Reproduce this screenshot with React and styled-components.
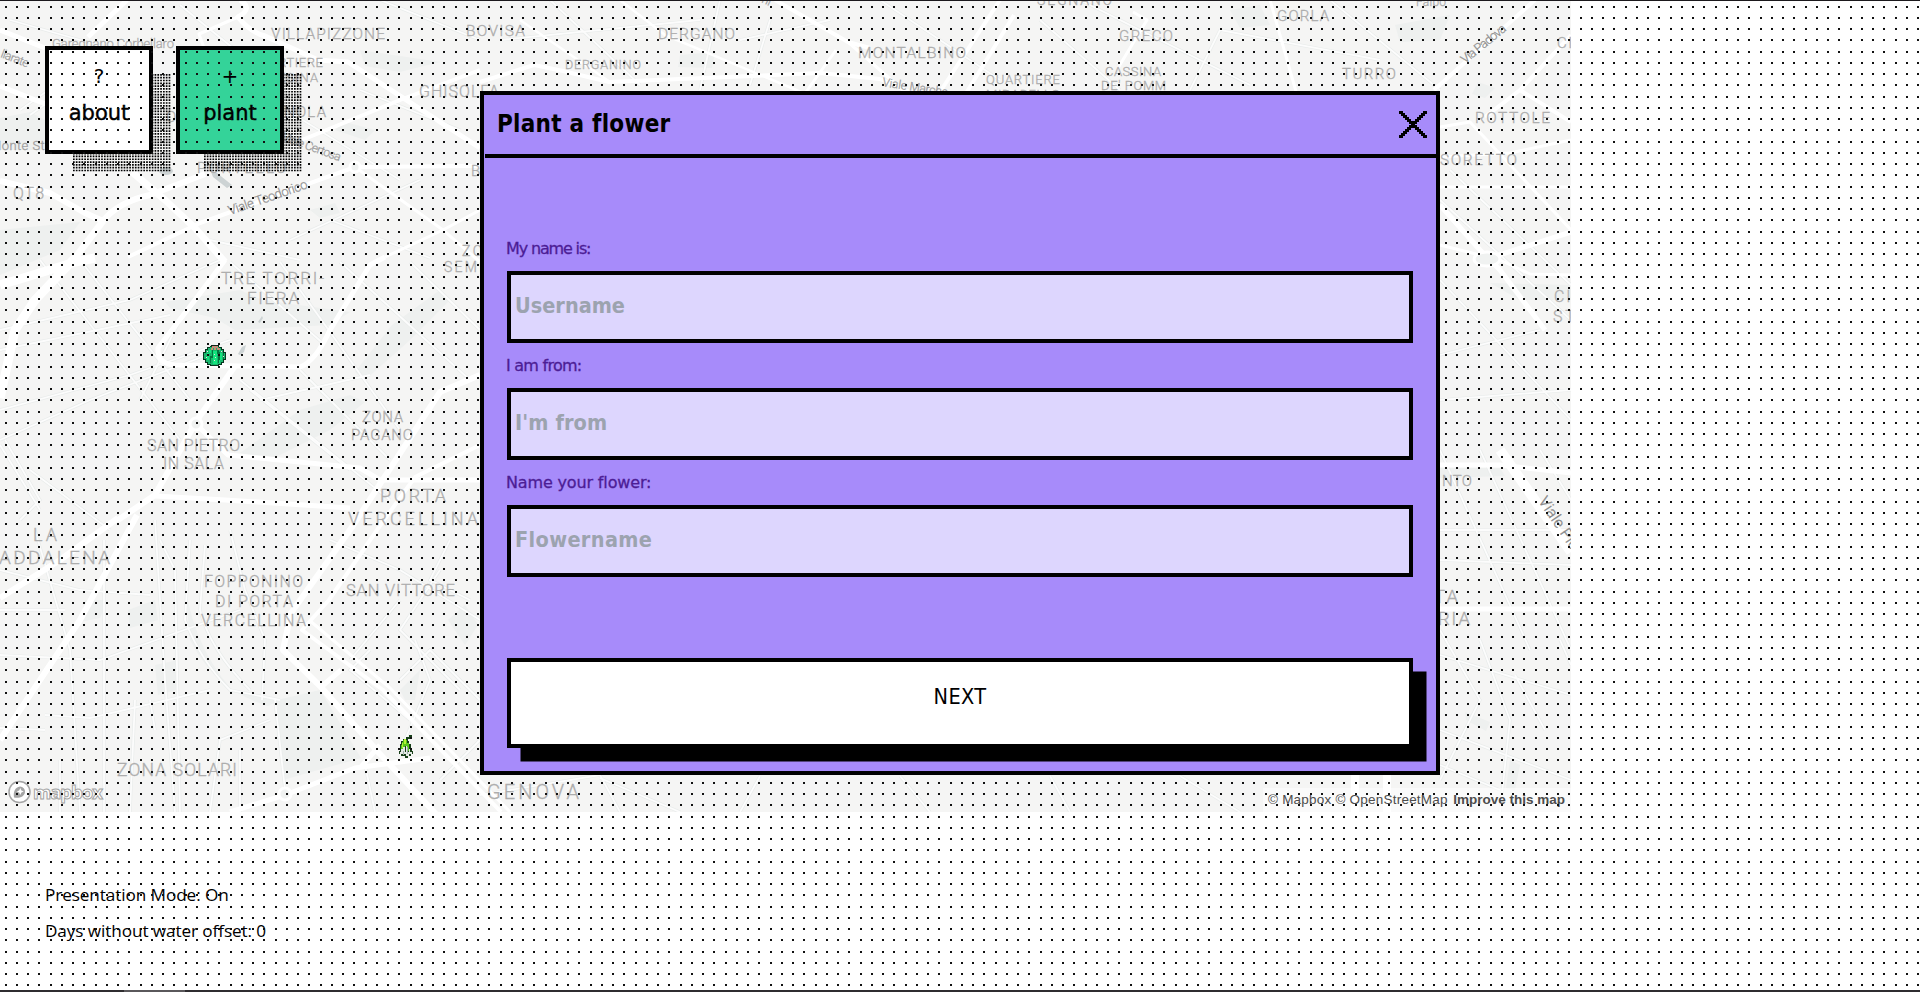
import React from 'react';
import styled, { createGlobalStyle } from 'styled-components';

const GlobalStyle = createGlobalStyle`
  *, *::before, *::after { box-sizing: border-box; }
  html, body { margin: 0; padding: 0; background: #fff; overflow: hidden; }
  body { font-family: "Open Sans", "Noto Sans", sans-serif; color: #000; }
`;

const pixelFont = '"DejaVu Sans", sans-serif';
const condensedFont = '"DejaVu Sans Condensed", "DejaVu Sans", sans-serif';

const Page = styled.main`
  position: relative;
  width: 1920px;
  height: 992px;
  overflow: hidden;
  background: #fff;
  display: flex;
  flex-direction: column;
  border-top: 1px solid #1b181c;
`;

const MapPane = styled.section`
  position: relative;
  flex: none;
  width: 1571px;
  height: 811px;
  overflow: hidden;
  background: #f5f5f4;
`;

const MapDrawing = styled.svg`
  display: block;
  margin-top: -1px;
`;

const Place = styled.text`
  font-family: Roboto, sans-serif;
  font-weight: 300;
  font-size: ${(p) => p.$size}px;
  fill: ${(p) => p.$tone};
  stroke: ${(p) => p.$tone};
  stroke-width: 0.3px;
`;

const MapLogo = styled.div`
  position: absolute;
  left: 8px;
  bottom: 8px;
  display: flex;
  align-items: center;
  gap: 2px;
`;

const Wordmark = styled.span`
  font: 700 18.5px/24px "Open Sans", sans-serif;
  letter-spacing: -1px;
  color: #fff;
  -webkit-text-stroke: 1px #a3a3a3;
`;

const Attribution = styled.div`
  position: absolute;
  right: 0;
  bottom: 0;
  width: 308px;
  height: 24px;
  padding: 0 6px 0 5px;
  display: flex;
  align-items: center;
  justify-content: space-between;
  background: rgba(255, 255, 255, 0.5);
  font: 13.5px/22px "Liberation Sans", sans-serif;
  color: #4c4c4c;
  white-space: nowrap;
`;

const Credits = styled.span`
  letter-spacing: 0.22px;
`;

const Hud = styled.nav`
  position: absolute;
  top: 45px;
  left: 45px;
  display: flex;
  gap: 23px;
`;

const TileSlot = styled.div`
  position: relative;
  z-index: 0;
`;

const TileShadow = styled.svg`
  position: absolute;
  z-index: -1;
  left: 28px;
  top: 28px;
`;

const Tile = styled.button`
  width: 108px;
  height: 108px;
  padding: 0;
  display: flex;
  flex-direction: column;
  align-items: center;
  justify-content: flex-start;
  border: 4px solid #000;
  background: ${(p) => p.$fill};
  color: #000;
  font-family: ${pixelFont};
`;

const TileIcon = styled.span`
  height: 43px;
  padding-top: 14px;
  font-size: 20px;
  line-height: 24px;
`;

const TileLabel = styled.span`
  padding-top: 6px;
  font-size: 21px;
  line-height: 28px;
  -webkit-text-stroke: 0.4px #000;
`;

const StatusList = styled.div`
  padding: 65px 0 0 45px;
  display: flex;
  flex-direction: column;
  font-size: 17.2px;
  line-height: 36px;
  letter-spacing: -0.1px;
  white-space: nowrap;
`;

const StatusLine = styled.div`
  height: 36px;
`;

const DotVeil = styled.svg`
  position: absolute;
  inset: 0;
  pointer-events: none;
`;

const BottomBar = styled.div`
  position: absolute;
  left: 0;
  right: 0;
  bottom: 0;
  height: 2px;
  padding-left: 124px;
  background: #2f2d30;
`;

const BottomThumb = styled.div`
  width: 61px;
  height: 2px;
  background: #5a585b;
`;

const Overlay = styled.div`
  position: absolute;
  inset: 0;
  padding-top: 90px;
  display: flex;
  justify-content: center;
  align-items: flex-start;
`;

const Dialog = styled.section`
  width: 960px;
  height: 684px;
  border: 4px solid #000;
  background: #a78bfa;
  display: flex;
  flex-direction: column;
`;

const DialogHeader = styled.header`
  height: 63px;
  margin-left: 1px;
  padding: 0 9px 0 12px;
  display: flex;
  align-items: center;
  justify-content: space-between;
  border-bottom: 4px solid #000;
`;

const Title = styled.h1`
  margin: -2px 0 0;
  font: 700 24px/30px ${condensedFont};
  letter-spacing: 0.25px;
`;

const CloseButton = styled.button`
  width: 28px;
  height: 28px;
  margin-top: 1px;
  padding: 0;
  border: 0;
  background: none;
`;

const Form = styled.form`
  flex: 1;
  padding: 0 23px;
  display: flex;
  flex-direction: column;
`;

const Fields = styled.div`
  padding-top: 68px;
  display: flex;
  flex-direction: column;
`;

const Field = styled.label`
  height: 117px;
  display: flex;
  flex-direction: column;
`;

const Caption = styled.span`
  height: 45px;
  padding-top: 12px;
  margin-left: -1px;
  font: 16px/22px ${pixelFont};
  letter-spacing: ${(p) => p.$track}px;
  color: #4c1d95;
  -webkit-text-stroke: 0.3px #4c1d95;
`;

const Input = styled.input`
  width: 100%;
  height: 72px;
  padding: 0 4px 4px;
  border: 4px solid #000;
  border-radius: 0;
  outline: 0;
  background: #ddd6fe;
  font: 700 21.5px/28px ${condensedFont};
  letter-spacing: ${(p) => p.$track}px;

  &::placeholder { color: #9ca3af; opacity: 1; }
`;

const NextButton = styled.button`
  width: 906px;
  height: 90px;
  margin-top: 81px;
  padding: 0 0 12px;
  border: 4px solid #000;
  background: #fff;
  box-shadow: 13.5px 13.5px 0 #000;
  color: #000;
  font: 21.5px/28px ${condensedFont};
  letter-spacing: 0.4px;
`;

const roads = [
  [5, 'M127 0L88 37'],
  [5, 'M240 0Q254 8 238 17Q250 32 265 36L318 60L348 62L480 148'],
  [3, 'M238 17L199 34L204 48'],
  [6, 'M0 181L50 193L85 213L103 221Q118 202 150 195L205 174'],
  [7, 'M103 221L75 258'],
  [7, 'M132 172L165 200L195 228L225 262'],
  [4, 'M128 257L200 223L355 167L480 166'],
  [3, 'M355 167L443 230L480 262M443 230L480 210M443 230L385 257'],
  [4, 'M302 140L400 100L480 70'],
  [5, 'M0 86L48 105M0 30L45 48'],
  [9, 'M75 258L35 300L15 330L0 398M0 285Q50 270 75 262L95 258'],
  [5, 'M225 260L195 300L158 348Q157 364 175 365L300 367Q315 362 330 330L370 265L385 257'],
  [6, 'M235 366L197 420L155 495L118 520'],
  [5, 'M200 428L228 455L360 468L380 480L480 480M155 496L225 500L350 508'],
  [6, 'M480 375L440 392L352 527L291 613L283 650L321 687L379 753L436 814'],
  [4, 'M480 445L415 477L377 530L329 600L302 630L383 690L501 812'],
  [3, 'M309 620L390 688L510 812'],
  [6, 'M118 518L60 560L0 598M137 515L80 620L0 740'],
  [5, 'M230 812L285 795L355 768L430 758M321 687L341 670M360 768L380 745'],
  [4, 'M480 82L534 65L563 71L609 82L820 73L880 79L910 92'],
  [2.5, 'M520 20L610 82M620 0L665 35L820 100'],
  [4, 'M775 0L848 42L870 48M1000 0L938 95M1014 15L965 95'],
  [3, 'M848 42L905 92M836 50L806 92M1270 0L1297 95M1133 12L1147 20L1118 68'],
  [4, 'M1535 0L1434 90M1571 35L1520 90L1485 117M1520 90L1571 122'],
  [3, 'M1440 127L1470 122L1571 230M1571 140L1510 153L1440 157M1440 187H1571'],
  [5, 'M1571 232L1490 258M1440 205L1480 250L1500 270L1545 330'],
  [3, 'M1440 245L1500 260L1530 274L1571 275'],
  [10, 'M1500 450L1571 552'],
  [5, 'M1440 465H1500L1571 473M1440 609H1571'],
  [8, 'M1355 775V812M1387 775V812'],
];

const lanes = [
  'M0 330L130 300L220 260M0 350L170 315M0 410L130 375L230 340M0 440L90 400L220 350',
  'M40 260L180 440M80 260L190 400M0 445L40 510M5 440L40 500L20 520M30 470L110 530',
  'M230 262L325 345M280 262L400 430M340 262L470 380M250 390L350 470M410 262L480 330',
  'M140 400L180 320M240 380L390 500M300 370L390 460M260 400L370 375',
  'M35 530L70 650L80 812M104 540V812M155 520L165 680L175 812M160 540L175 570L180 812',
  'M0 570L80 590L150 595M0 610H65M0 655L100 660L240 610M0 728L45 730M45 715L90 718L210 690',
  'M190 540L185 620Q200 660 230 690L280 700M205 545L200 610Q210 650 250 690',
  'M230 530L245 590L265 640L262 700M275 700L285 790M135 700L130 812M150 700L155 730',
  'M330 540L400 570L480 620M400 600L350 660M440 570L400 630L460 690M400 680L430 650L480 700',
  'M370 650L350 670L410 720M415 640L430 680L405 740M450 540L430 580L470 600M440 780L480 740',
  'M60 812V760M210 812L220 740L270 720M240 750V812M365 765L375 812',
  'M10 20L150 60M180 5L260 70M380 0L480 40M360 90L460 130M270 100L400 180M290 240L420 180',
  'M210 240L300 260M330 220L430 258M20 110L70 75M30 115L80 80',
  'M500 40L700 20M550 0L640 85M720 0L700 90M740 40L830 20M750 85L770 20M880 0L1000 80',
  'M1040 20L1120 90M1080 0L1250 85M1190 90L1220 30M1220 30L1380 60M1330 0L1440 90',
  'M1440 200L1571 320M1450 170L1571 285M1440 280L1571 420M1440 355L1540 330M1440 400L1571 390',
  'M1440 450L1530 650M1480 450L1571 650M1540 450L1571 500M1440 530H1571M1440 560L1571 565',
  'M1440 630L1480 700L1440 780M1480 640L1510 720L1500 812M1440 655L1571 695M1440 730L1571 780M1515 675L1545 730M1440 765L1500 790M1560 640L1571 665',
  'M480 795L600 775L620 812M600 778L680 812M760 776L740 812M900 776L930 812M1050 776L1070 812M1180 776L1240 812',
];

const parks = [
  'M165 302L240 290L262 300L350 312L330 325L235 330L215 318L170 308Z',
  'M240 453L300 410L350 395L365 402L330 430L270 460Z',
  'M392 325L440 290L450 300L410 340L365 380L355 372Z',
  'M277 700L320 690L361 758L283 780Z',
  'M183 565Q188 640 232 690L280 700L268 706Q215 690 190 640Z',
  'M0 118L30 112L45 120V150H0Z',
  'M0 230L80 222L60 250L0 275Z',
  'M360 50L440 62L400 72L365 66Z',
  'M345 122L375 130L365 140L335 130Z',
  'M310 210L335 203L340 213L320 218Z',
  'M85 600H108L100 618L80 622Z',
  'M128 610L155 600L158 620L130 628Z',
  'M155 665L178 660L176 690L158 695Z',
  'M400 690L420 670L415 700L405 700Z',
  'M448 620L465 605L478 625L465 645Z',
  'M680 55L715 52L712 68L678 67Z',
  'M1230 10L1260 5L1270 25L1240 28Z',
  'M1395 25L1450 15L1440 40L1400 42Z',
  'M1490 283L1571 285V300H1520Z',
  'M1465 712L1490 722L1486 731L1466 720Z',
  'M1510 760L1520 765L1515 790L1506 788Z',
  'M1440 467L1500 468L1505 476L1440 478Z',
  'M1478 82L1495 88L1485 98L1472 94Z',
];

const A = '#adadad';
const B = '#9e9e9e';
// text, x, baseline, width, size, tone, angle
const places = [
  ['VILLAPIZZONE', 271, 38.5, 114, 15.5, A],
  ['Garegnano Corbellaro', 52, 48, 122, 13, A],
  ['QUARTIERE', 251, 67, 72, 13, A],
  ['VARESINA', 251, 82, 67, 13, A],
  ['CAGNOLA', 251, 117, 75, 15, A],
  ['O', 166, 122, 10, 15, A],
  ['Monte Stella', -10, 149.5, 76, 13, B],
  ['llarate', 0, 57, 29, 12, B, 21],
  ['QT8', 13, 199, 31, 16, A],
  ['PORTELLO', 197, 173, 89, 15, A],
  ['Viale Certosa', 281, 140, 62, 12, B, 20],
  ['Viale Teodorico', 230, 215, 83, 13, '#929292', -19],
  ['BOVISA', 466, 36, 59, 15.5, A],
  ['GHISOLFA', 419, 97, 80, 16, A],
  ['BULLONA', 471, 176, 80, 15, A],
  ['ZONA', 462, 256, 44, 14, A],
  ['SEMPIONE', 444, 272, 84, 14, A],
  ['TRE TORRI-', 221, 284, 103, 17, A],
  ['FIERA', 247, 304, 52, 17, A],
  ['ZONA', 362, 422, 41, 15, A],
  ['PAGANO', 351, 440, 62, 15, A],
  ['SAN PIETRO', 147, 451, 93, 16, A],
  ['IN SALA', 163, 469, 61, 16, A],
  ['PORTA', 380, 502, 66, 18, A],
  ['VERCELLINA', 348, 525, 130, 18, A],
  ['LA', 33, 541, 24, 18, A],
  ['ADDALENA', -1, 564, 111, 19, A],
  ['FOPPONINO', 204, 587, 99, 16, A],
  ['DI PORTA', 215, 607, 78, 16, A],
  ['VERCELLINA', 201, 626, 105, 16, A],
  ['SAN VITTORE', 346, 596, 109, 16.5, A],
  ['ZONA SOLARI', 117, 776, 120, 17.5, A],
  ['GENOVA', 487, 799, 92, 20, A],
  ['DERGANO', 658, 38.5, 77, 15.5, A],
  ['DERGANINO', 565, 68.5, 76, 12.5, A],
  ['MONTALBINO', 858, 58, 108, 15.5, A],
  ['Viale Marche', 882, 86, 66, 12, B, 9],
  ['QUARTIERE', 986, 84, 74, 13, A],
  ['MIRABELLO', 986, 99, 74, 13, A],
  ['CASSINA', 1105, 76, 56, 13, A],
  ["DE' POMM", 1101, 90, 65, 13, A],
  ['GRECO', 1119, 41, 54, 15, A],
  ['GORLA', 1277, 21, 52, 15, A],
  ['SEGNANO', 1037, 5, 75, 14, A],
  ['TURRO', 1342, 78.5, 54, 15, A],
  ['Falpo', 1416, 6, 30, 12, A],
  ['ni', 761, 2, 9, 12, B, 25],
  ['Via Padova', 1465, 64, 54, 12.5, '#929292', -39],
  ['CIMIANO', 1557, 48, 70, 15, A],
  ['ROTTOLE', 1475, 122.5, 75, 15.5, A],
  ['CASORETTO', 1417, 165, 100, 15.5, A],
  ['CITTÀ', 1554, 302, 50, 16, A],
  ['STUDI', 1553, 322, 55, 16, A],
  ['NTO', 1442, 486, 30, 15, A],
  ['PORTA', 1393, 603, 65, 19, A],
  ['VITTORIA', 1378, 625, 92, 19, A],
  ['Viale Piceno', 1538, 501, 86, 15.5, '#868686', 56],
];

function CityMap() {
  return (
    <MapDrawing width="1571" height="812" viewBox="0 0 1571 812">
      <g fill="#eef0ef">{parks.map((d) => <path key={d} d={d} />)}</g>
      <g fill="#cdd3d4">
        <path d="M238 354l4-7 4-2-2 7-4 3zM258 322l4-6 1 2-3 5zM211 172l6 1 15 12-5 3-14-11z" />
        <ellipse cx="166" cy="171" rx="7" ry="4" />
      </g>
      <g fill="none" stroke="#e9eceb" strokeWidth="3.2">{lanes.map((d) => <path key={d} d={d} />)}</g>
      <g fill="none" stroke="#fcfcfc" strokeWidth="1.8">{lanes.map((d) => <path key={d} d={d} />)}</g>
      <g fill="none" stroke="#fff" strokeLinejoin="round">
        {roads.map(([w, d]) => <path key={d} d={d} strokeWidth={w} />)}
      </g>
      <g fill="#f0f2f1" stroke="#fff" strokeWidth="3">
        <circle cx="196" cy="424" r="6" />
        <circle cx="285" cy="794" r="6" />
        <circle cx="355" cy="167" r="5" />
        <ellipse cx="1487" cy="259" rx="13" ry="7" />
      </g>
      {places.map(([t, x, y, w, s, tone, r]) => (
        <Place key={t + x + y} x={x} y={y} textLength={w} $size={s} $tone={tone}
          transform={r ? `rotate(${r} ${x} ${y})` : undefined}>{t}</Place>
      ))}
      <Cactus />
      <Snowdrop />
    </MapDrawing>
  );
}

function Cactus() {
  return (
    <g transform="translate(203 344)" shapeRendering="crispEdges">
      <path d="M7 2h9v1h3v2h2v3h2v8h-2v3h-2v2h-3v1H7v-1H4v-2H2v-3H0V8h2V5h2V3h3z" fill="#07351f" />
      <path d="M7 3h9v1h2v2h2v3h2v6h-2v3h-2v2h-3v1H8v-1H5v-2H3v-3H1V9h2V6h2V4h2z" fill="#18b76c" />
      <path d="M6 6h2v3H6v7H4V9h2zM10 7h4v13h-4zM17 9h2v7h-2v3h-2V8h2z" fill="#12e57d" />
      <path d="M9 6h1v8H8v5H7v-7h2zM14 6h2v2h1v8h-1v3h-1v-9h-1zM20 9h1v6h-1z" fill="#04763f" />
      <path d="M8 1h8v1H8z" fill="#102318" />
      <path d="M9 2h6v2H9zM8 4h2v2H8zM14 4h3v2h-3zM11 4h2v2h-2z" fill="#c58d78" />
      <path d="M11 10h1v1h-1zM12 13h1v1h-1zM11 16h1v1h-1zM18 7h1v1h-1zM20 12h1v1h-1zM4 7h1v1H4zM3 13h1v1H3z" fill="#efd8e0" />
    </g>
  );
}

function Snowdrop() {
  return (
    <g transform="translate(398 735)" shapeRendering="crispEdges">
      <path d="M11 0h3v2h-2v2h-2v2h1v3h2v4h1v3h1v3h-2v2h-3v2H7v-2H3v-2H1v-3h1V9h1V6h2V4h3V2h3z" fill="#173f18" />
      <path d="M5 5h4v3h2v8H9v-5H7v3H5v2H3v-6h1V7h1z" fill="#58c51c" />
      <path d="M6 4h2v5H6zM4 8h1v5H4z" fill="#b4f434" />
      <path d="M3 14h2v-2h2v6H5v1H2v-2h1zM8 11h1v6h2v-3h1v3h2v2h-3v2H8v-2H6v-2h2z" fill="#e3e8e4" />
      <path d="M9 12h1v7H9zM5 16h1v4H5z" fill="#9bafa5" />
    </g>
  );
}

function MapboxMark() {
  return (
    <svg width="23" height="24" viewBox="0 0 23 24">
      <circle cx="11.5" cy="12" r="10.5" fill="#fff" stroke="#a5a5a5" strokeWidth="1.5" />
      <path d="M6 17.5C5 12 7 7 12 6.5a5 5 0 0 1 5 5.5c-.5 5-6 6.500-11 5.500z" fill="#a5a5a5" />
      <path d="M12.300 8l1.100 2.400 2.400 1.100-2.400 1.100-1.100 2.400-1.100-2.400-2.400-1.100 2.400-1.100z" fill="#fff" />
    </svg>
  );
}

const crossCells = Array.from({ length: 13 }, (_, i) => i);

function PixelCross() {
  return (
    <svg width="28" height="28" viewBox="0 0 28 28" shapeRendering="crispEdges">
      {crossCells.map((i) => (
        <React.Fragment key={i}>
          <rect x={i * 2} y={i * 2} width="4" height="3" />
          <rect x={24 - i * 2} y={i * 2} width="4" height="3" />
        </React.Fragment>
      ))}
    </svg>
  );
}

const veilSteps = [5, 16, 27, 38];

function Dots() {
  return (
    <DotVeil width="1920" height="991">
      <defs>
        <pattern id="veil" width="45" height="45" patternUnits="userSpaceOnUse">
          {veilSteps.map((y) => veilSteps.map((x) => (
            <rect key={`${x}-${y}`} x={x} y={y} width="2" height="2" fill="#111" />
          )))}
        </pattern>
      </defs>
      <rect width="1920" height="991" fill="url(#veil)" />
    </DotVeil>
  );
}

const shadeSteps = Array.from({ length: 35 }, (_, i) => i * 2.8125);

function DottedShadow() {
  const row = shadeSteps.map((x) => `M${x} 0h1.7v1.7h-1.7z`).join('');
  return (
    <TileShadow width="98" height="98">
      {shadeSteps.map((y) => <path key={y} d={row} transform={`translate(0 ${y})`} />)}
    </TileShadow>
  );
}

function ActionTile({ icon, label, fill }) {
  return (
    <TileSlot>
      <DottedShadow />
      <Tile $fill={fill}>
        <TileIcon>{icon}</TileIcon>
        <TileLabel>{label}</TileLabel>
      </Tile>
    </TileSlot>
  );
}

const fields = [
  { caption: 'My name is:', hint: 'Username', track: -1.15, hintTrack: 0 },
  { caption: 'I am from:', hint: "I'm from", track: -0.75, hintTrack: 0.1 },
  { caption: 'Name your flower:', hint: 'Flowername', track: -0.15, hintTrack: 0.35 },
];

export default function App() {
  return (
    <Page>
      <GlobalStyle />
      <MapPane>
        <CityMap />
        <MapLogo>
          <MapboxMark />
          <Wordmark>mapbox</Wordmark>
        </MapLogo>
        <Attribution>
          <Credits>© Mapbox © OpenStreetMap</Credits>
          <strong>Improve this map</strong>
        </Attribution>
      </MapPane>
      <StatusList>
        <StatusLine>Presentation Mode: On</StatusLine>
        <StatusLine>Days without water offset: 0</StatusLine>
      </StatusList>
      <Hud>
        <ActionTile icon="?" label="about" fill="#fff" />
        <ActionTile icon="+" label="plant" fill="#34d399" />
      </Hud>
      <Dots />
      <BottomBar>
        <BottomThumb />
      </BottomBar>
      <Overlay>
        <Dialog>
          <DialogHeader>
            <Title>Plant a flower</Title>
            <CloseButton aria-label="Close">
              <PixelCross />
            </CloseButton>
          </DialogHeader>
          <Form>
            <Fields>
              {fields.map((f) => (
                <Field key={f.caption}>
                  <Caption $track={f.track}>{f.caption}</Caption>
                  <Input placeholder={f.hint} $track={f.hintTrack} />
                </Field>
              ))}
            </Fields>
            <NextButton type="button">NEXT</NextButton>
          </Form>
        </Dialog>
      </Overlay>
    </Page>
  );
}
